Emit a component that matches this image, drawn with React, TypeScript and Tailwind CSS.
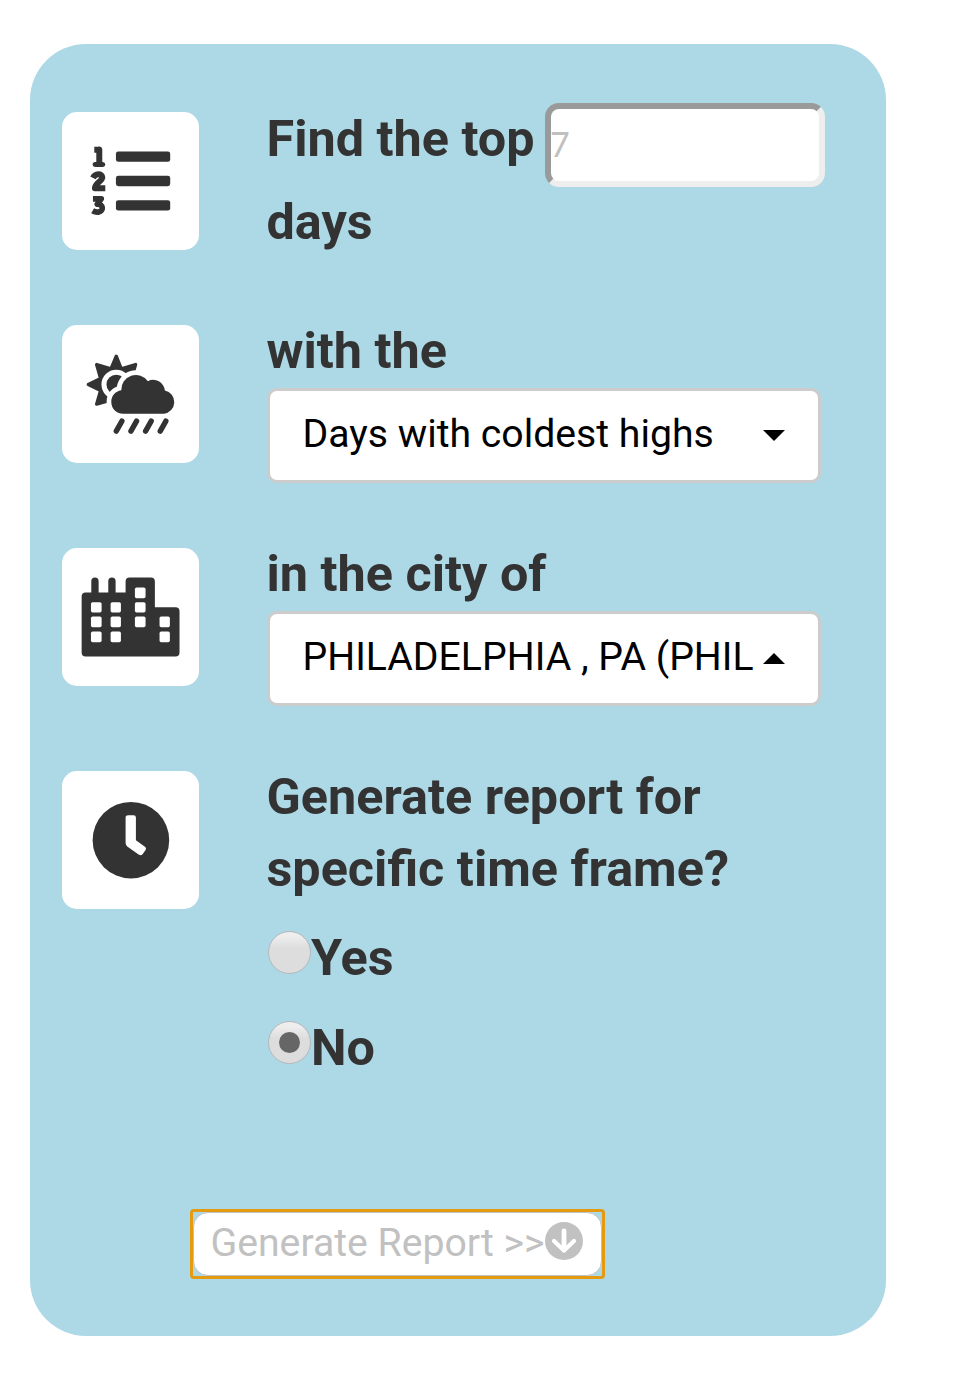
import type { ReactNode } from "react";

function Tile({ children }: { children: ReactNode }) {
  return (
    <div className="mt-[10px] -ml-[0.5px] mr-[0.5px] h-[138px] w-[137.5px] shrink-0 overflow-hidden rounded-[15px] bg-white text-[#333]">
      {children}
    </div>
  );
}

function ListIcon() {
  return (
    <svg viewBox="35 36 413 413" className="block size-full" fill="currentColor">
      <rect x="197" y="154" width="163" height="31" rx="7" />
      <rect x="197" y="227" width="163" height="31" rx="7" />
      <rect x="197" y="300" width="163" height="31" rx="7" />
      <g fill="none" stroke="currentColor" strokeWidth="18" strokeLinejoin="round">
        <path d="M132 149H140L147 148V190" />
        <path strokeWidth="15" strokeLinecap="round" d="M134.500 193H157.500" />
        <path d="M128 233C135 219 155 219 156 231C156 243 134 249 134 264H165" />
        <path strokeWidth="17" d="M128 296H153L141 312C160 311 161 334 144 336C137 337 132 335 127 332" />
      </g>
    </svg>
  );
}

function WeatherIcon() {
  return (
    <svg viewBox="35 30 413 413" className="block size-full" fill="currentColor">
      <path
        stroke="currentColor"
        strokeWidth="10"
        strokeLinejoin="round"
        d="M198 123L213 161L256 148L244 190L245 208L244 226L198 250L168 259L139 267L151 226L114 208L151 190L139 148L182 161Z"
      />
      <circle cx="198" cy="208" r="37" stroke="white" strokeWidth="15" />
      <path
        stroke="white"
        strokeWidth="28"
        strokeLinejoin="round"
        d="M220 296C195 296 183 278 183 260C183 242 195 228 213 225A44 44 0 0 1 293 198A35 35 0 0 1 344 226A35.500 35.500 0 0 1 341 296Z"
      />
      <path d="M220 296C195 296 183 278 183 260C183 242 195 228 213 225A44 44 0 0 1 293 198A35 35 0 0 1 344 226A35.500 35.500 0 0 1 341 296Z" />
      <path
        fill="none"
        stroke="currentColor"
        strokeWidth="16"
        strokeLinecap="round"
        d="M215 318L198 348M259 318L242 348M303 318L286 348M347 318L330 348"
      />
    </svg>
  );
}

function CityIcon() {
  return (
    <svg viewBox="36 24 413 413" className="block size-full" fill="currentColor">
      <path d="M107 157H124V123Q124 112 135 112Q146 112 146 123V157H175V123Q175 112 186 112Q197 112 197 123V157H227V124Q227 112 239 112H303Q315 112 315 124V201H377Q389 201 389 213V337Q389 349 377 349H107Q95 349 95 337V169Q95 157 107 157Z" />
      <g fill="white">
        <rect x="123" y="186" width="32" height="31" rx="5" />
        <rect x="123" y="229" width="32" height="32" rx="5" />
        <rect x="123" y="274" width="32" height="32" rx="5" />
        <rect x="182" y="186" width="31" height="31" rx="5" />
        <rect x="182" y="229" width="31" height="32" rx="5" />
        <rect x="182" y="274" width="31" height="32" rx="5" />
        <rect x="255" y="142" width="32" height="32" rx="5" />
        <rect x="255" y="186" width="32" height="31" rx="5" />
        <rect x="255" y="229" width="32" height="32" rx="5" />
        <rect x="329" y="229" width="31" height="32" rx="5" />
        <rect x="329" y="274" width="31" height="32" rx="5" />
      </g>
    </svg>
  );
}

function ClockIcon() {
  return (
    <svg viewBox="35 33 413 413" className="block size-full" fill="currentColor">
      <circle cx="242" cy="240" r="115" />
      <path
        fill="white"
        d="M234 165H250Q257 165 257 172V240L284 260Q290 265 285 271L277 282Q272 288 265 283L231 259Q226 255 226 248V172Q226 165 234 165Z"
      />
    </svg>
  );
}

function DownCircleIcon() {
  return (
    <svg viewBox="0 0 38 38" className="-mt-[5px] block size-[38px] shrink-0" fill="none">
      <circle cx="19" cy="19" r="19" fill="#c1c1c1" />
      <path d="M19 9V28" stroke="white" strokeWidth="4.800" strokeLinecap="round" />
      <path d="M9 19L19 28.500L29 19" stroke="white" strokeWidth="4.200" strokeLinecap="round" strokeLinejoin="round" />
    </svg>
  );
}

function Select({ value, open }: { value: string; open?: boolean }) {
  return (
    <div className="mt-px flex h-[94.5px] w-[554px] items-center rounded-[10px] border-[3px] border-[#ccc] bg-white pl-[33px] text-black">
      <div className="h-[90px] w-[449px] text-[39.2px] leading-[88.5px] font-normal whitespace-nowrap">
        {value}
      </div>
      <svg viewBox="0 0 22 11" className="ml-[11.5px] h-[11px] w-[22px] shrink-0">
        <path d={open ? "M0 11H22L11 0Z" : "M0 0H22L11 11Z"} />
      </svg>
    </div>
  );
}

function Radio({ label, checked }: { label: string; checked?: boolean }) {
  return (
    <label className="flex h-[89.5px] items-start">
      <span className="mt-[7px] ml-px flex size-[43px] shrink-0 items-center justify-center rounded-full border border-[#b5b8ba] bg-linear-to-b from-[#eee] from-10% to-[#ddd] to-40%">
        <input type="radio" name="timeframe" defaultChecked={checked} className="peer sr-only" />
        <span className="hidden size-[21px] rounded-full bg-[#666] peer-checked:block" />
      </span>
      <span className="ml-[0.5px] leading-[68px]">{label}</span>
    </label>
  );
}

export default function App() {
  return (
    <div className="h-[1388px] w-[980px] overflow-hidden bg-white pt-[44px] pl-[30px] font-['Roboto',sans-serif]">
      <main className="flex h-[1292px] w-[856px] flex-col rounded-[56px] bg-[#add8e6] pt-[58px] pl-[32px] text-[50.35px] leading-[72px] font-bold text-[#333]">
        <section className="flex h-[213px] gap-[67px]">
          <Tile><ListIcon /></Tile>
          <div>
            <div className="flex">
              <div className="-mt-[5px] w-[278.5px] leading-[83px] whitespace-nowrap">Find the top</div>
              <input
                placeholder="7"
                className="mt-px h-[84px] w-[280px] rounded-[14px] border-[6px] border-t-[#9a9a9a] border-r-[#eee] border-b-[#eee] border-l-[#9a9a9a] bg-white pb-[4px] indent-[-1px] font-['Lato',sans-serif] text-[34px] font-normal placeholder:text-[#c0c0c0]"
              />
            </div>
            <div className="-mt-[7px] leading-[83px]">days</div>
          </div>
        </section>
        <section className="flex h-[223px] gap-[67px]">
          <Tile><WeatherIcon /></Tile>
          <div>
            <div>with the</div>
            <Select value="Days with coldest highs" />
          </div>
        </section>
        <section className="flex h-[223px] gap-[67px]">
          <Tile><CityIcon /></Tile>
          <div>
            <div>in the city of</div>
            <Select value="PHILADELPHIA , PA (PHIL" open />
          </div>
        </section>
        <section className="flex h-[447.5px] gap-[67px]">
          <Tile><ClockIcon /></Tile>
          <div>
            <div className="mb-[19px] whitespace-nowrap">
              Generate report for
              <br />
              specific time frame?
            </div>
            <Radio label="Yes" />
            <Radio label="No" checked />
          </div>
        </section>
        <div className="ml-[127.500px] flex h-[70px] w-[415.5px] items-stretch rounded-[4px] border-[3px] border-[#e49b0f]">
          <button className="flex flex-1 items-center rounded-[15px] border border-[#c1c1c1] bg-white pl-[17px] text-[39.2px] font-normal whitespace-nowrap text-[#c1c1c1]">
            <span className="-mt-[2px] w-[334.5px] text-left">Generate Report &gt;&gt;</span>
            <DownCircleIcon />
          </button>
        </div>
      </main>
    </div>
  );
}
